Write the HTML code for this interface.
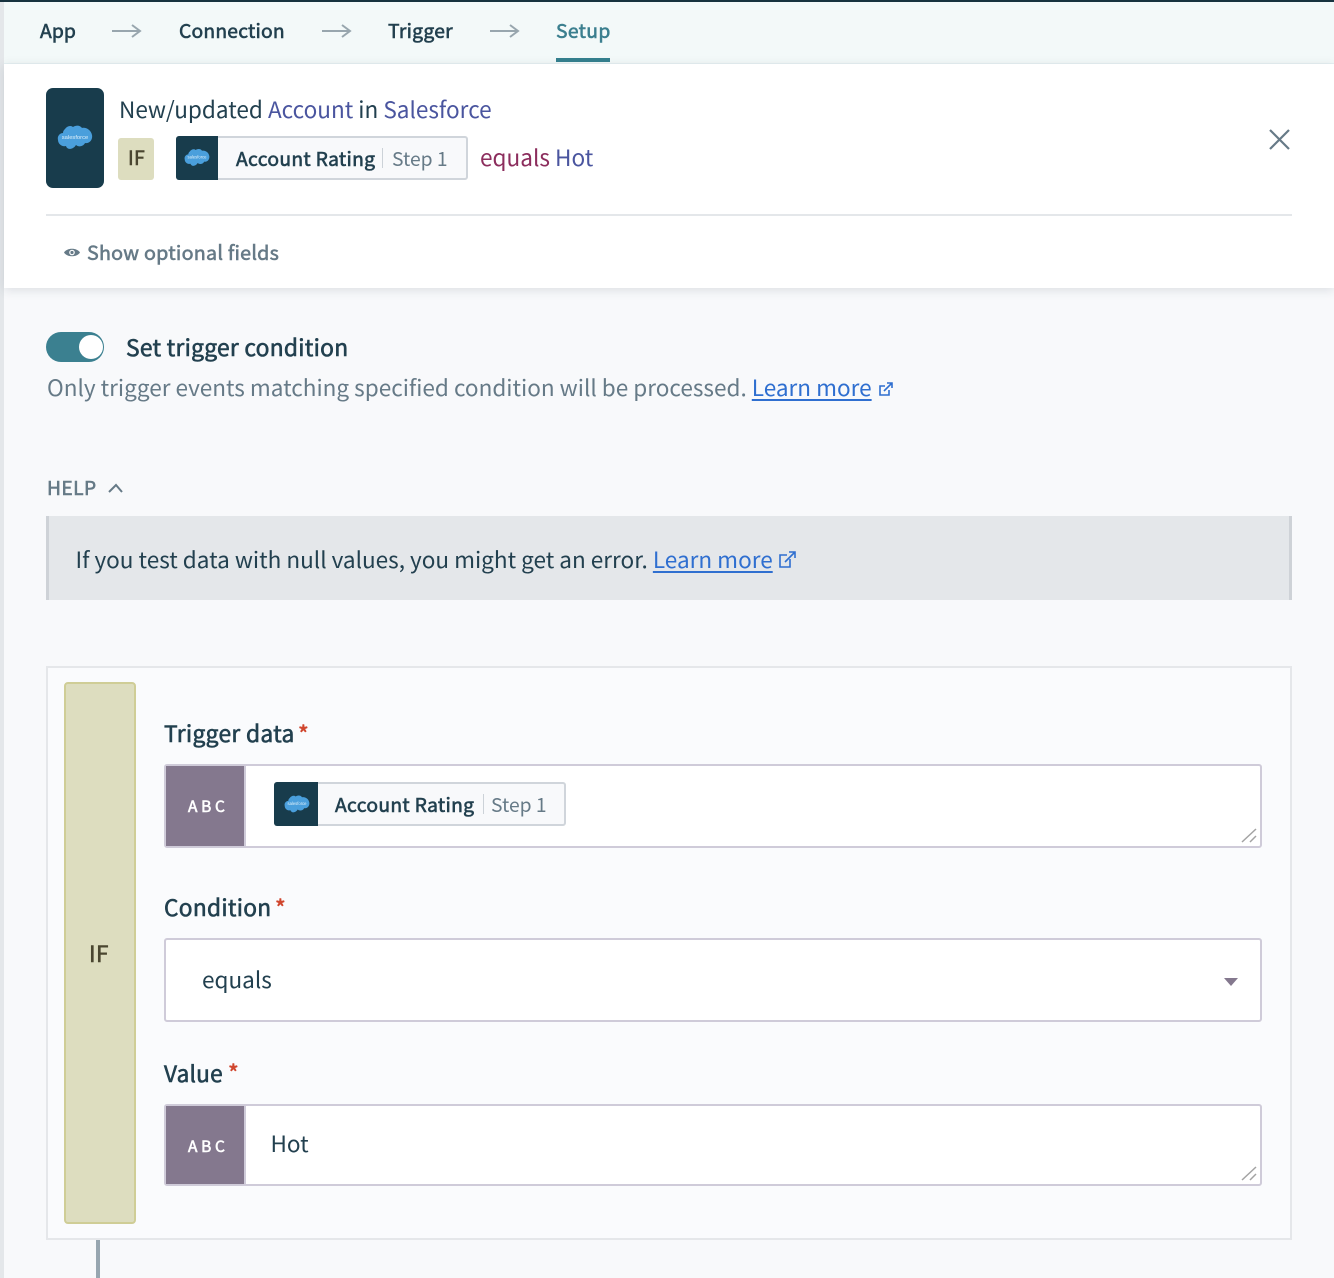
<!DOCTYPE html>
<html><head><meta charset="utf-8"><style>
html,body{margin:0;padding:0}
body{width:1334px;height:1278px;position:relative;overflow:hidden;background:#f8f9fb;font-family:"Noto Sans CJK SC","Liberation Sans",sans-serif;color:#22404f}
.a{position:absolute;box-sizing:border-box}
.t{position:absolute;white-space:nowrap;line-height:30px;height:30px}
.b{font-weight:400;-webkit-text-stroke:.6px currentColor}
svg{position:absolute;display:block}
a{color:#2f6fd0;text-decoration:underline;text-underline-offset:3px}
.cloud{fill:#4a9fdc}
</style></head><body>
<div class="a" style="left:0;top:0;width:1334px;height:2px;background:#17333f"></div>
<div class="a" style="left:0;top:2px;width:4px;height:1276px;background:#e4e7ea"></div>
<div class="a" style="left:4px;top:2px;width:1330px;height:62px;background:#f3f9f9;border-bottom:1px solid #e6f1f3"></div>
<div class="t b" style="left:40px;top:15px;font-size:19.3px;letter-spacing:.1px">App</div>
<div class="t b" style="left:179px;top:15px;font-size:19.3px;letter-spacing:.2px">Connection</div>
<div class="t b" style="left:388px;top:15px;font-size:19.3px;letter-spacing:.28px">Trigger</div>
<div class="t b" style="left:556px;top:15px;font-size:19.3px;letter-spacing:.35px;color:#3b7f8f">Setup</div>
<div class="a" style="left:556px;top:58px;width:54px;height:4px;background:#35808f"></div>
<svg style="left:112px;top:22px" width="30" height="18" fill="none" stroke="#98a6ae" stroke-width="2"><path d="M0 9H28M20 3L28 9L20 15"/></svg>
<svg style="left:322px;top:22px" width="30" height="18" fill="none" stroke="#98a6ae" stroke-width="2"><path d="M0 9H28M20 3L28 9L20 15"/></svg>
<svg style="left:490px;top:22px" width="30" height="18" fill="none" stroke="#98a6ae" stroke-width="2"><path d="M0 9H28M20 3L28 9L20 15"/></svg>

<div class="a" style="left:4px;top:64px;width:1330px;height:224px;background:#fff;box-shadow:0 2px 10px rgba(40,60,70,.14)"></div>
<div class="a" style="left:46px;top:88px;width:58px;height:100px;background:#183c4c;border-radius:7px"></div>
<svg style="left:57px;top:125px" width="36" height="26" viewBox="0 0 36 26"><path class="cloud" d="M8 4C10 1 14 0 16 2C19 0 23 0 25 3C29 2 34 5 35 10C36 15 32 19 28 18C26 22 21 22 19 20C16 25 10 25 9 21C5 22 1 19 1 15C0 11 3 8 6 8C6 6 7 5 8 4Z"/><text x="18" y="14" font-size="5.8" fill="#dff0fa" text-anchor="middle" font-family="Liberation Sans">salesforce</text></svg>

<div class="t" style="left:119px;top:94px;font-size:22.57px"><span>New/updated </span><span style="color:#4a559f">Account</span><span> in </span><span style="color:#4a559f">Salesforce</span></div>

<div class="a" style="left:118px;top:138px;width:36px;height:42px;background:#ddddbf;border-radius:3px"></div>
<div class="t b" style="left:128px;top:142px;font-size:19.5px;letter-spacing:.3px;color:#4a4630">IF</div>

<div class="a" style="left:176px;top:136px;width:292px;height:44px;background:#f8f9fb;border:2px solid #d0d5db;border-radius:3px"></div>
<div class="a" style="left:176px;top:136px;width:42px;height:44px;background:#183c4c;border-radius:3px 0 0 3px"></div>
<svg style="left:184px;top:148px" width="26" height="20" viewBox="0 0 36 26"><path class="cloud" d="M8 4C10 1 14 0 16 2C19 0 23 0 25 3C29 2 34 5 35 10C36 15 32 19 28 18C26 22 21 22 19 20C16 25 10 25 9 21C5 22 1 19 1 15C0 11 3 8 6 8C6 6 7 5 8 4Z"/><text x="18" y="14" font-size="5.8" fill="#dff0fa" text-anchor="middle" font-family="Liberation Sans">salesforce</text></svg>
<div class="t b" style="left:236px;top:143px;font-size:19.3px;letter-spacing:.3px">Account Rating</div>
<div class="a" style="left:382px;top:148px;width:1px;height:20px;background:#ccd2d8"></div>
<div class="t" style="left:392px;top:143px;font-size:19.3px;color:#667a87">Step 1</div>
<div class="t" style="left:480px;top:142px;font-size:22.6px"><span style="color:#8c2d5d">equals</span> <span style="color:#4a559f">Hot</span></div>

<svg style="left:1268px;top:128px" width="24" height="24" fill="none" stroke="#667a87" stroke-width="2.2"><path d="M2 2L21 21M21 2L2 21"/></svg>
<div class="a" style="left:46px;top:214px;width:1246px;height:2px;background:#e4e7ea"></div>

<svg style="left:64px;top:246px" width="16" height="13" viewBox="0 0 16 13"><path d="M0 6.5C3 1.5 13 1.5 16 6.5C13 11.5 3 11.5 0 6.5Z" fill="#667a87"/><circle cx="8" cy="6.5" r="2.8" fill="#fff"/><circle cx="8" cy="6.5" r="1.6" fill="#667a87"/></svg>
<div class="t b" style="left:87px;top:237px;font-size:19.7px;letter-spacing:.25px;color:#667a87">Show optional fields</div>

<div class="a" style="left:46px;top:332px;width:58px;height:30px;border-radius:15px;background:#3b8090"></div>
<div class="a" style="left:79px;top:335px;width:24px;height:24px;border-radius:12px;background:#fff"></div>
<div class="t b" style="left:126px;top:332px;font-size:22.8px;letter-spacing:.25px">Set trigger condition</div>
<div class="t" style="left:47px;top:372px;font-size:22.56px;color:#667a87">Only trigger events matching specified condition will be processed. <a>Learn more</a></div>
<svg style="left:878px;top:381px" width="16" height="16" fill="none" stroke="#2f6fd0" stroke-width="1.6"><path d="M11 9V14H2V5H7M6 10L14 2M9 2H14V7"/></svg>

<div class="t b" style="left:47px;top:472px;font-size:19.2px;letter-spacing:.45px;color:#667a87">HELP</div>
<svg style="left:108px;top:482px" width="16" height="12" fill="none" stroke="#667a87" stroke-width="2"><path d="M1 10L8 3L14 10"/></svg>

<div class="a" style="left:46px;top:516px;width:1246px;height:84px;background:#e4e7ea;border-left:3px solid #ced2d7;border-right:3px solid #ced2d7"></div>
<div class="t" style="left:75.5px;top:544px;font-size:22.56px">If you test data with null values, you might get an error. <a>Learn more</a></div>
<svg style="left:778px;top:550px" width="19" height="19" fill="none" stroke="#2f6fd0" stroke-width="1.6"><path d="M12 9V17H2V5H9M7 12L17 2M11 2H17V8"/></svg>

<div class="a" style="left:46px;top:666px;width:1246px;height:574px;background:#fafbfd;border:2px solid #e5e7ea"></div>
<div class="a" style="left:64px;top:682px;width:72px;height:542px;background:#ddddbf;border:2px solid #cfcd96;border-radius:4px"></div>
<div class="t b" style="left:89px;top:938px;font-size:22.5px;letter-spacing:.4px;color:#4a4630">IF</div>
<div class="a" style="left:96px;top:1240px;width:4px;height:38px;background:#97a6b0"></div>

<div class="t b" style="left:164px;top:718px;font-size:22.8px;letter-spacing:.3px">Trigger data</div>
<div class="t b" style="left:298px;top:718px;font-size:23px;color:#d0462e">*</div>
<div class="a" style="left:164px;top:764px;width:1098px;height:84px;background:#fff;border:2px solid #cfcbd9;border-radius:3px"></div>
<div class="a" style="left:166px;top:766px;width:78px;height:80px;background:#84788e"></div>
<div class="a" style="left:244px;top:766px;width:2px;height:80px;background:#cfcbd9"></div>
<div class="t b" style="left:188px;top:791px;font-size:15.5px;color:#fff;letter-spacing:3.7px">ABC</div>
<div class="a" style="left:274px;top:782px;width:292px;height:44px;background:#f8f9fb;border:2px solid #d0d5db;border-radius:3px"></div>
<div class="a" style="left:274px;top:782px;width:44px;height:44px;background:#183c4c;border-radius:3px 0 0 3px"></div>
<svg style="left:284px;top:795px" width="26" height="19" viewBox="0 0 36 26"><path class="cloud" d="M8 4C10 1 14 0 16 2C19 0 23 0 25 3C29 2 34 5 35 10C36 15 32 19 28 18C26 22 21 22 19 20C16 25 10 25 9 21C5 22 1 19 1 15C0 11 3 8 6 8C6 6 7 5 8 4Z"/><text x="18" y="14" font-size="5.8" fill="#dff0fa" text-anchor="middle" font-family="Liberation Sans">salesforce</text></svg>
<div class="t b" style="left:335px;top:789px;font-size:19.3px;letter-spacing:.3px">Account Rating</div>
<div class="a" style="left:483px;top:794px;width:1px;height:20px;background:#ccd2d8"></div>
<div class="t" style="left:491px;top:789px;font-size:19.3px;color:#667a87">Step 1</div>
<svg style="left:1240px;top:827px" width="18" height="16" fill="none" stroke="#a3a3a3" stroke-width="1.5"><path d="M2 15L16 2M10 15L16 9"/></svg>

<div class="t b" style="left:164px;top:892px;font-size:22.7px;letter-spacing:.3px">Condition</div>
<div class="t b" style="left:275px;top:892px;font-size:23px;color:#d0462e">*</div>
<div class="a" style="left:164px;top:938px;width:1098px;height:84px;background:#fff;border:2px solid #cfcbd9;border-radius:3px"></div>
<div class="t" style="left:202px;top:964px;font-size:22.56px">equals</div>
<div class="a" style="left:1224px;top:978px;width:0;height:0;border-left:7px solid transparent;border-right:7px solid transparent;border-top:8px solid #84788e"></div>

<div class="t b" style="left:164px;top:1058px;font-size:22.6px;letter-spacing:.2px">Value</div>
<div class="t b" style="left:228px;top:1057px;font-size:23px;color:#d0462e">*</div>
<div class="a" style="left:164px;top:1104px;width:1098px;height:82px;background:#fff;border:2px solid #cfcbd9;border-radius:3px"></div>
<div class="a" style="left:166px;top:1106px;width:78px;height:78px;background:#84788e"></div>
<div class="a" style="left:244px;top:1106px;width:2px;height:78px;background:#cfcbd9"></div>
<div class="t b" style="left:188px;top:1131px;font-size:15.5px;color:#fff;letter-spacing:3.7px">ABC</div>
<div class="t" style="left:270.5px;top:1128px;font-size:22.56px">Hot</div>
<svg style="left:1240px;top:1165px" width="18" height="16" fill="none" stroke="#a3a3a3" stroke-width="1.5"><path d="M2 15L16 2M10 15L16 9"/></svg>
</body></html>
